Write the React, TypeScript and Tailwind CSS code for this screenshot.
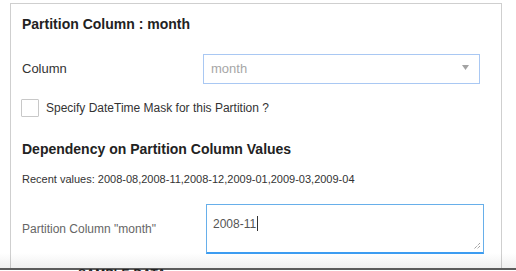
import React from "react";

/**
 * Partition column dependency form — one panel of the wizard step.
 */
const recentValues = ["2008-08", "2008-11", "2008-12", "2009-01", "2009-03", "2009-04"];

function SelectBox({ placeholder }: { placeholder: string }) {
  return (
    <div className="flex h-[30px] w-[277px] items-center justify-between border border-[#a9c8f3] bg-white pl-[7px] pr-[10px]">
      <span className="text-[13px] text-[#a6a6a6]">{placeholder}</span>
      <svg width="7" height="5" viewBox="0 0 7 5" className="mt-[-3px]">
        <path d="M0 0 L7 0 L3.5 5 Z" fill="#a3a3a3" />
      </svg>
    </div>
  );
}

function TextAreaBox({ value }: { value: string }) {
  return (
    <div className="relative h-[50px] w-[278px] border border-b-2 border-[#67afea] border-b-[#3c9cf1] bg-white pl-[6px] pt-[6px]">
      <span className="text-[12px] leading-[16px] text-[#555]">{value}</span>
      <span className="ml-[1px] inline-block h-[15px] w-px translate-y-[3px] bg-[#333]" />
      <svg width="8" height="8" viewBox="0 0 8 8" className="absolute bottom-[2px] right-[2px]">
        <path d="M7 1 L1 7 M7 4 L4 7" stroke="#777" strokeWidth="1" strokeDasharray="1 1" />
      </svg>
    </div>
  );
}

export default function App() {
  return (
    <div
      className="flex h-[271px] w-[516px] flex-col overflow-hidden bg-white text-[#333]"
      style={{ fontFamily: '"Liberation Sans", Arial, sans-serif' }}
    >
      <div className="relative flex flex-1 flex-col pt-[3px]">
        <section className="ml-[10px] w-[492px] flex-1 border-x border-t border-[#cfcfcf] pl-[11px] pt-[10px]">
          <h3 className="text-[14px] font-bold leading-[20px] text-[#222]">Partition Column : month</h3>

          <div className="mt-[20px] flex items-center">
            <label className="w-[181px] text-[13px] text-[#333]">Column</label>
            <SelectBox placeholder="month" />
          </div>

          <label className="mt-[15px] ml-[-1px] flex items-center gap-[7px]">
            <span className="h-[18px] w-[18px] rounded-[1px] border border-[#c8c8c8] bg-white" />
            <span className="text-[12px] text-[#333]">Specify DateTime Mask for this Partition ?</span>
          </label>

          <h3 className="mt-[22px] text-[14px] font-bold leading-[20px] text-[#222]">
            Dependency on Partition Column Values
          </h3>

          <p className="mt-[13px] text-[11px] leading-[15px] text-[#333]">
            Recent values: {recentValues.join(",")}
          </p>

          <div className="mt-[17px] flex items-center">
            <label className="w-[184px] text-[12px] text-[#666]">Partition Column "month"</label>
            <TextAreaBox value="2008-11" />
          </div>
        </section>
        <div className="pointer-events-none absolute inset-x-0 bottom-0 h-[15px] bg-gradient-to-b from-transparent to-black/[0.06]" />
      </div>

      <footer className="h-[3px] shrink-0 border-t-2 border-[#5c5c5c] bg-white">
        <span className="ml-[78px] block text-[12px] font-bold uppercase leading-none tracking-wide text-[#222] mt-[-2px]">
          Sample Data
        </span>
      </footer>
    </div>
  );
}
